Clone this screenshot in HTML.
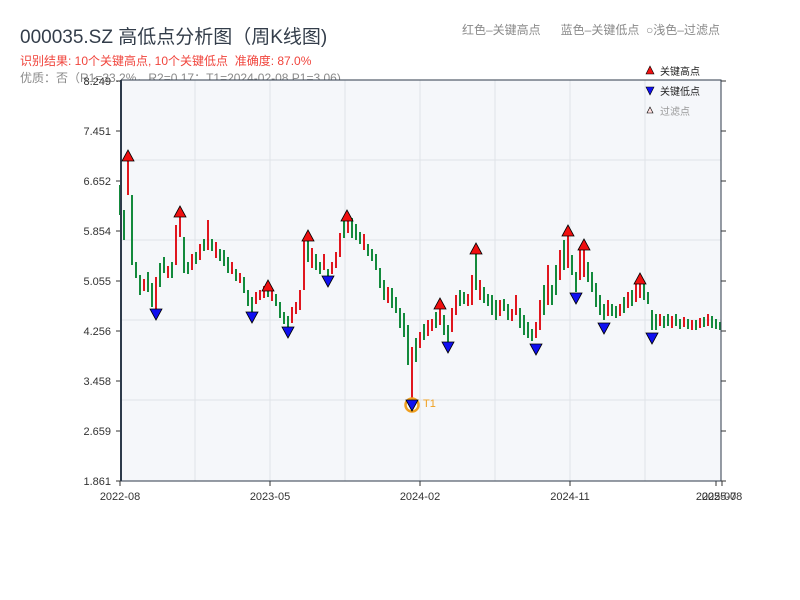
<!DOCTYPE html>
<html><head><meta charset="utf-8"><style>
body{margin:0;background:#fff;width:800px;height:600px;overflow:hidden;font-family:"Liberation Sans","Noto Sans CJK SC",sans-serif;position:relative}
.t{position:absolute;white-space:nowrap}
</style></head><body>
<div class="t" style="left:20px;top:22px;font-size:19px;color:#333d4a">000035.SZ 高低点分析图（周K线图)</div>
<div class="t" style="left:20px;top:52px;font-size:12px;color:#f0443c">识别结果: 10个关键高点, 10个关键低点&nbsp;&nbsp;准确度: 87.0%</div>
<div class="t" style="left:20px;top:69px;font-size:12px;color:#8a8a8a">优质：否（R1=33.2%，R2=0.17；T1=2024-02-08 P1=3.06)</div>
<div class="t" style="left:462px;top:21px;font-size:12px;color:#8a8a8a">红色–关键高点&nbsp;&nbsp;&nbsp;&nbsp;&nbsp;&nbsp;蓝色–关键低点&nbsp;&nbsp;○浅色–过滤点</div>
<svg width="800" height="600" style="position:absolute;left:0;top:0" font-family="Liberation Sans, Noto Sans CJK SC, sans-serif">
<rect x="121" y="80" width="600" height="401" fill="#f5f7fa"/>
<g stroke="#e0e3e8">
<line x1="195" y1="80" x2="195" y2="481"/><line x1="270" y1="80" x2="270" y2="481"/><line x1="345" y1="80" x2="345" y2="481"/><line x1="420" y1="80" x2="420" y2="481"/><line x1="495" y1="80" x2="495" y2="481"/><line x1="570" y1="80" x2="570" y2="481"/><line x1="645" y1="80" x2="645" y2="481"/>
<line x1="121" y1="160" x2="721" y2="160"/><line x1="121" y1="240" x2="721" y2="240"/><line x1="121" y1="320" x2="721" y2="320"/><line x1="121" y1="400" x2="721" y2="400"/>
</g>
<g font-size="11" fill="#333" text-anchor="end">
<text x="111" y="85">8.249</text><text x="111" y="135">7.451</text><text x="111" y="185">6.652</text><text x="111" y="235">5.854</text><text x="111" y="285">5.055</text><text x="111" y="335">4.256</text><text x="111" y="385">3.458</text><text x="111" y="435">2.659</text><text x="111" y="485">1.861</text>
</g>
<path stroke="#333" d="M116 81H121M116 131H121M116 181H121M116 231H121M116 281H121M116 331H121M116 381H121M116 431H121M116 481H121M721 81H726M721 131H726M721 181H726M721 231H726M721 281H726M721 331H726M721 381H726M721 431H726M721 481H726M120 481V486M270 481V486M420 481V486M570 481V486M716 481V486M722 481V486"/>
<g font-size="11" fill="#333" text-anchor="middle">
<text x="120" y="500">2022-08</text><text x="270" y="500">2023-05</text><text x="420" y="500">2024-02</text><text x="570" y="500">2024-11</text><text x="716" y="500">2025-07</text><text x="722" y="500">2025-08</text>
</g>
<path fill="none" stroke="#138a3c" stroke-width="2" d="M120 185V215M124 210V240M132 195V265M136 262V278M140 275V295M148 272V292M152 283V307M160 263V287M164 257V273M172 262V278M184 237V273M188 262V274M196 252V264M204 239V251M212 239V251M220 249V261M224 250V266M228 257V273M236 269V281M244 277V293M248 290V306M252 297V313M268 287V297M276 294V306M280 302V318M284 312V324M288 316V328M308 238V262M316 254V270M320 262V274M328 269V281M344 218V238M352 218V238M356 224V240M360 232V244M368 244V256M372 249V261M376 254V270M380 268V288M384 280V300M392 288V308M396 297V313M400 308V328M404 313V337M408 325V365M416 338V362M424 324V340M436 312V328M444 315V335M448 325V345M460 290V306M464 292V304M476 250V290M484 287V303M488 294V306M492 295V315M496 300V320M504 299V311M508 304V320M520 308V328M524 315V335M528 322V338M532 329V341M544 285V315M552 285V305M556 265V295M564 240V270M572 255V275M576 272V292M588 262V282M592 272V292M596 283V307M600 295V315M604 304V320M612 304V316M616 306V318M624 297V313M632 290V306M644 284V300M648 292V304M652 310V330M656 314V330M664 316V328M668 314V326M676 314V326M680 319V329M688 319V329M696 320V330M704 317V327M712 316V328M716 319V329M720 322V330"/>
<path fill="none" stroke="#e0161e" stroke-width="2" d="M128 160V195M144 279V291M156 277V313M168 266V278M176 225V265M180 213V237M192 254V270M200 244V260M208 220V250M216 242V258M232 262V274M240 273V283M256 292V304M260 290V300M264 286V298M272 289V301M292 307V323M296 302V314M300 290V310M304 240V290M312 248V268M324 254V270M332 262V274M336 252V268M340 233V257M348 217V233M364 234V250M388 287V303M412 347V403M420 332V348M428 320V336M432 319V331M440 305V325M452 308V332M456 295V315M468 294V306M472 275V305M480 280V300M500 300V316M512 309V321M516 295V315M536 322V338M540 300V330M548 265V305M560 250V280M568 233V268M580 250V280M584 247V277M608 300V316M620 304V316M628 292V308M636 282V302M640 278V298M660 314V326M672 316V328M684 317V327M692 320V330M700 318V328M708 314V326"/>
<path stroke="#2d3a4a" fill="none" d="M121 80H721V481M121 481H721"/>
<line x1="121" y1="80" x2="121" y2="481" stroke="#2d3a4a" stroke-width="2"/>
<circle cx="412" cy="405" r="6.5" fill="none" stroke="#f0a020" stroke-width="2.5"/><text x="423" y="407" font-size="11" fill="#f0a020">T1</text>
<g fill="#f01010" stroke="#000" stroke-width="0.8">
<polygon points="128,150 122,161 134,161"/><polygon points="180,206 174,217 186,217"/><polygon points="268,280 262,291 274,291"/><polygon points="308,230 302,241 314,241"/><polygon points="347,210 341,221 353,221"/><polygon points="440,298 434,309 446,309"/><polygon points="476,243 470,254 482,254"/><polygon points="568,225 562,236 574,236"/><polygon points="584,239 578,250 590,250"/><polygon points="640,273 634,284 646,284"/>
</g>
<g fill="#1010f0" stroke="#000" stroke-width="0.8">
<polygon points="156,320 150,309 162,309"/><polygon points="252,323 246,312 258,312"/><polygon points="288,338 282,327 294,327"/><polygon points="328,287 322,276 334,276"/><polygon points="412,411 406,400 418,400"/><polygon points="448,353 442,342 454,342"/><polygon points="536,355 530,344 542,344"/><polygon points="576,304 570,293 582,293"/><polygon points="604,334 598,323 610,323"/><polygon points="652,344 646,333 658,333"/>
</g>
<polygon points="650,66 646,74 654,74" fill="#f01010" stroke="#000" stroke-width="0.6"/><text x="660" y="75" font-size="10" fill="#222">关键高点</text>
<polygon points="650,95 646,87 654,87" fill="#1010f0" stroke="#000" stroke-width="0.6"/><text x="660" y="95" font-size="10" fill="#222">关键低点</text>
<polygon points="650,107 647,113 653,113" fill="#ffe0e0" stroke="#000" stroke-width="0.6"/><text x="660" y="115" font-size="10" fill="#999">过滤点</text>
</svg>
</body></html>
